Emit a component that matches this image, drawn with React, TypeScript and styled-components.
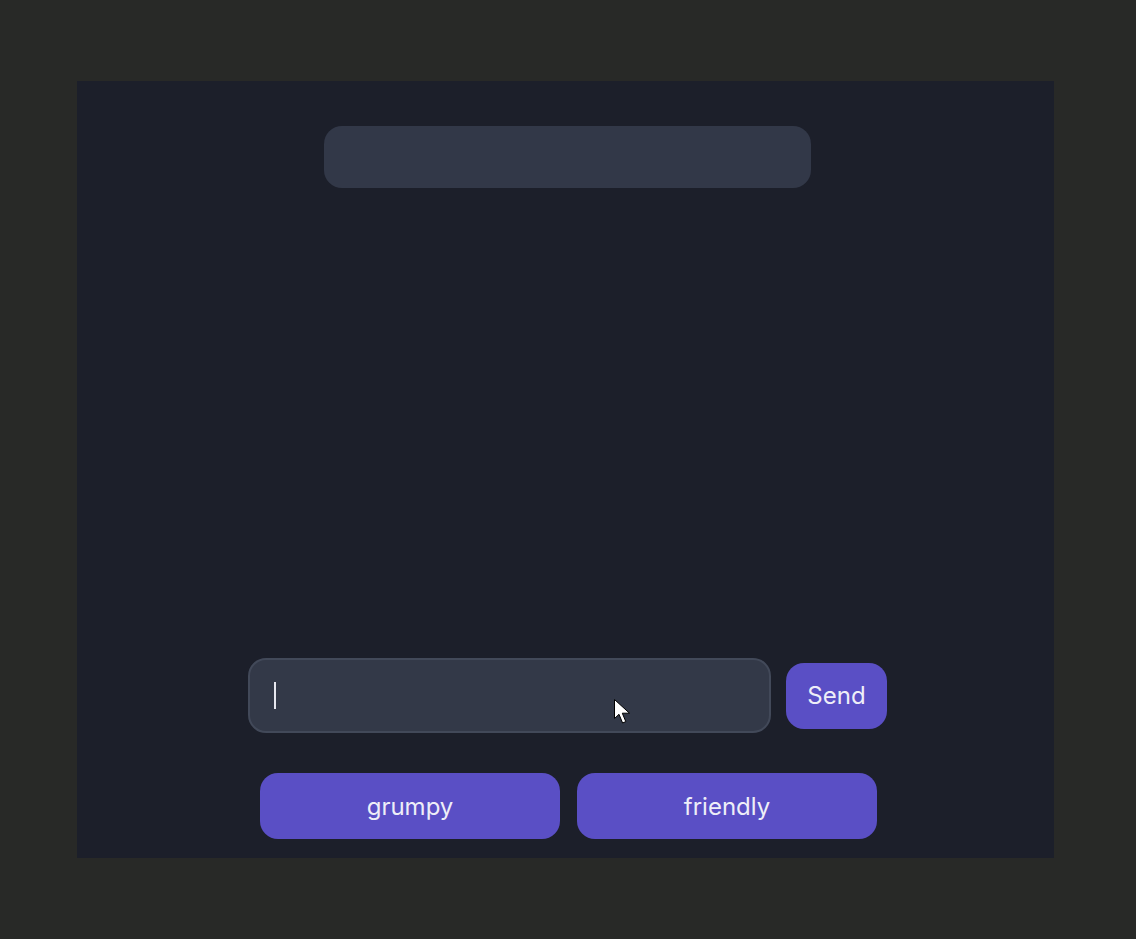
import React from "react";
import styled, { createGlobalStyle } from "styled-components";

const Global = createGlobalStyle`
  html, body { margin: 0; padding: 0; background: #282927; }
  body { font-family: Inter, "Noto Sans", sans-serif; }
`;

const Page = styled.div`
  width: 1136px;
  height: 939px;
  box-sizing: border-box;
  padding: 81px 0 0 77px;
  position: relative;
`;

const Panel = styled.div`
  width: 977px;
  height: 777px;
  background: #1c1f2a;
  box-sizing: border-box;
  padding: 45px 0 19px 4px;
  display: flex;
  flex-direction: column;
  align-items: center;
`;

const TopBar = styled.div`
  width: 487px;
  height: 62px;
  border-radius: 18px;
  background: #323848;
`;

const Spacer = styled.div`
  flex: 1;
`;

const InputRow = styled.div`
  display: flex;
  align-items: center;
  gap: 15px;
`;

const InputBox = styled.div`
  width: 523px;
  height: 75px;
  box-sizing: border-box;
  border: 2px solid #424959;
  border-radius: 18px;
  background: #333948;
  display: flex;
  align-items: center;
  padding-left: 24px;
`;

const Caret = styled.div`
  width: 2px;
  height: 27px;
  background: #e6e7ee;
`;

const PurpleButton = styled.button<{ $w: number }>`
  width: ${(p) => p.$w}px;
  height: 66px;
  border: none;
  border-radius: 18px;
  background: #5a4fc5;
  color: #eeeef8;
  font-family: Inter, "Noto Sans", sans-serif;
  font-size: 24px;
  font-weight: 400;
  padding: 0;
  display: flex;
  align-items: center;
  justify-content: center;
`;

const ButtonRow = styled.div`
  display: flex;
  gap: 17px;
  margin-top: 40px;
  margin-left: 2px;
`;

const Pointer = styled.svg`
  position: absolute;
  left: 613px;
  top: 698px;
`;

export default function App() {
  return (
    <>
      <Global />
      <Page>
        <Panel>
          <TopBar />
          <Spacer />
          <InputRow>
            <InputBox>
              <Caret />
            </InputBox>
            <PurpleButton $w={101}>Send</PurpleButton>
          </InputRow>
          <ButtonRow>
            <PurpleButton $w={300}>grumpy</PurpleButton>
            <PurpleButton $w={300}>friendly</PurpleButton>
          </ButtonRow>
        </Panel>
        <Pointer width="20" height="28" viewBox="0 0 20 28">
          <path
            d="M1.5 1.5 V20.5 L6 16.3 L9.6 25 L12.8 23.6 L9.3 15.2 L16.5 15.2 Z"
            fill="#ffffff"
            stroke="#000000"
            strokeWidth="1"
            strokeLinejoin="miter"
          />
        </Pointer>
      </Page>
    </>
  );
}
